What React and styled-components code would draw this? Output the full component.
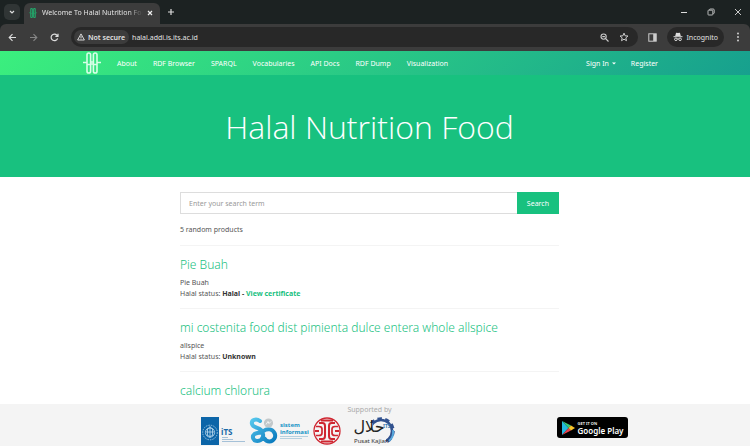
import { useState } from "react";
import styled, { createGlobalStyle } from "styled-components";

const GlobalStyle = createGlobalStyle`
  * {
    box-sizing: border-box;
  }
  body {
    margin: 0;
    background: #fff;
    color: #555;
    font-family: "Noto Sans", "Open Sans", sans-serif;
    font-size: 7px;
    line-height: 11px;
  }
  button, input {
    font: inherit;
    border: 0;
    padding: 0;
    margin: 0;
    background: none;
    color: inherit;
  }
  a {
    color: inherit;
    text-decoration: none;
  }
  svg {
    display: block;
    flex-shrink: 0;
  }
`;

const products = [
  { id: 1, name: "Pie Buah", detail: "Pie Buah", status: "Halal", certificate: true },
  {
    id: 2,
    name: "mi costenita food dist pimienta dulce entera whole allspice",
    detail: "allspice",
    status: "Unknown",
  },
  { id: 3, name: "calcium chlorura" },
];

const menus = [
  "About",
  "RDF Browser",
  "SPARQL",
  "Vocabularies",
  "API Docs",
  "RDF Dump",
  "Visualization",
];

function HalalMark({ size, color, width = 2 }) {
  return (
    <svg width={size} height={size} viewBox="0 0 20 22" fill="none" stroke={color} strokeWidth={width}>
      <path d="M1 10.5H5M8.5 12H11.5M8.5 10H11.5M15 10.5H19M5 12.5H8.5M11.5 12.5H15" strokeWidth="1.3" />
      <rect x="5" y="1" width="3.6" height="20" rx="1.8" />
      <rect x="11.4" y="1" width="3.6" height="20" rx="1.8" />
    </svg>
  );
}

function Browser() {
  return (
    <STBrowser>
      <STTabBar>
        <STTabSearch aria-label="Search tabs">
          <svg width="6" height="6" viewBox="0 0 6 6" fill="none" stroke="#ddd" strokeWidth="1.2">
            <path d="M1 2l2 2 2-2" />
          </svg>
        </STTabSearch>
        <STTab>
          <HalalMark size={10} color="#23a56a" width={2.4} />
          <STTabTitle>Welcome To Halal Nutrition Foo</STTabTitle>
          <STIconButton aria-label="Close tab">
            <svg width="6" height="6" viewBox="0 0 6 6" stroke="#eee" strokeWidth="1.2">
              <path d="M1 1l4 4M5 1L1 5" />
            </svg>
          </STIconButton>
        </STTab>
        <STIconButton aria-label="New tab">
          <svg width="8" height="8" viewBox="0 0 8 8" stroke="#ddd" strokeWidth="1.2">
            <path d="M4 1v6M1 4h6" />
          </svg>
        </STIconButton>
        <STWindowButtons>
          <STIconButton aria-label="Minimize">
            <svg width="8" height="8" viewBox="0 0 8 8" stroke="#ddd">
              <path d="M1 4.5h6" />
            </svg>
          </STIconButton>
          <STIconButton aria-label="Restore">
            <svg width="8" height="8" viewBox="0 0 8 8" fill="none" stroke="#ddd" strokeWidth=".8">
              <rect x="1" y="2.2" width="4.8" height="4.8" rx=".6" />
              <path d="M2.6 2V1.6q0-.6.6-.6h3q1 0 1 1v3q0 .6-.8.6" />
            </svg>
          </STIconButton>
          <STIconButton aria-label="Close">
            <svg width="8" height="8" viewBox="0 0 8 8" stroke="#ddd" strokeWidth=".9">
              <path d="M1 1l6 6M7 1L1 7" />
            </svg>
          </STIconButton>
        </STWindowButtons>
      </STTabBar>
      <STToolbar>
        <STHistory>
          <STIconButton aria-label="Back">
            <svg width="9" height="9" viewBox="0 0 9 9" fill="none" stroke="#ddd" strokeWidth="1.1">
              <path d="M8 4.5H1.3M4.5 1.2L1.2 4.5l3.3 3.3" />
            </svg>
          </STIconButton>
          <STIconButton aria-label="Forward">
            <svg width="9" height="9" viewBox="0 0 9 9" fill="none" stroke="#858585" strokeWidth="1.1">
              <path d="M1 4.5h6.7M4.5 1.2l3.3 3.3-3.3 3.3" />
            </svg>
          </STIconButton>
          <STIconButton aria-label="Reload">
            <svg width="9" height="9" viewBox="0 0 9 9" fill="none" stroke="#ddd" strokeWidth="1.2">
              <path d="M7.6 5.3A3.3 3.3 0 1 1 6.9 2.2l.8.8M8 .8v2.6H5.4" />
            </svg>
          </STIconButton>
        </STHistory>
        <STAddress>
          <STSecurity>
            <svg width="8" height="8" viewBox="0 0 8 8" fill="none" stroke="#e6e6e6" strokeWidth=".9">
              <path d="M4 .9L7.4 7H.6zM4 3v2M4 5.5v.8" />
            </svg>
            Not secure
          </STSecurity>
          <STUrl aria-label="Address" defaultValue="halal.addi.is.its.ac.id" />
          <STIconButton aria-label="Zoom">
            <svg width="9" height="9" viewBox="0 0 9 9" fill="none" stroke="#ccc" strokeWidth="1.1">
              <circle cx="3.6" cy="3.6" r="2.6" />
              <path d="M5.5 5.5l3 3M2.3 3.6h2.6" />
            </svg>
          </STIconButton>
          <STIconButton aria-label="Bookmark">
            <svg width="10" height="10" viewBox="0 0 10 10" fill="none" stroke="#ccc" strokeWidth="1">
              <path d="M5 1.1l1.1 2.7 2.9.2-2.2 1.9.7 2.8L5 7.2 2.5 8.7l.7-2.8L1 4l2.9-.2z" />
            </svg>
          </STIconButton>
        </STAddress>
        <STIconButton aria-label="Side panel">
          <svg width="9" height="9" viewBox="0 0 9 9" fill="none" stroke="#ccc">
            <rect x=".8" y=".8" width="7.4" height="7.4" />
            <path d="M5.2 1h3v7h-3z" fill="#ccc" stroke="none" />
          </svg>
        </STIconButton>
        <STIncognito>
          <svg width="10" height="10" viewBox="0 0 10 10" fill="none" stroke="#ddd" strokeWidth="1">
            <path d="M.5 4.7h9" />
            <path d="M2.2 4L3 1.1q.2-.5.7-.3L5 1.1l1.3-.3q.5-.2.7.3L7.8 4z" fill="#ddd" stroke="none" />
            <circle cx="2.9" cy="7.3" r="1.3" />
            <circle cx="7.1" cy="7.3" r="1.3" />
            <path d="M4.2 7q.8-.5 1.6 0" />
          </svg>
          Incognito
        </STIncognito>
        <STIconButton aria-label="Menu">
          <svg width="8" height="10" viewBox="0 0 8 10" fill="#ddd">
            <circle cx="4" cy="1.5" r=".9" />
            <circle cx="4" cy="5" r=".9" />
            <circle cx="4" cy="8.5" r=".9" />
          </svg>
        </STIconButton>
      </STToolbar>
    </STBrowser>
  );
}

function Sponsors() {
  return (
    <STSponsors>
      <svg width="46" height="28" viewBox="0 0 46 28">
        <rect x="1" width="18" height="28" fill="#0c65a8" />
        <g fill="none" stroke="#b9d8ee" strokeWidth=".8">
          <circle cx="10" cy="15.5" r="7.3" strokeDasharray="1.5 1" />
          <circle cx="10" cy="15.5" r="4.6" />
          <path d="M10 9v12M6.5 12.5l3.5-2 3.5 2M6 15h8M6.5 18q3.5 3 7 0M7.5 12v6M12.5 12v6" />
        </g>
        <text x="21" y="18" fontSize="8" fontWeight="700" fill="#1769a8">
          iTS
        </text>
        <path d="M22 20.5h6M22 22.5h11M22 24.5h23" stroke="#91b4d0" strokeWidth=".8" />
      </svg>
      <svg width="61" height="28" viewBox="0 0 61 28">
        <defs>
          <linearGradient id="wave" x1="0" y1="0" x2="1" y2="1">
            <stop offset="0" stopColor="#55c6ec" />
            <stop offset="1" stopColor="#0879bd" />
          </linearGradient>
        </defs>
        <path
          d="M11 4C7 1 2 3 3 7c1 4 6 3 9 6 4 4 2 11-3.5 11-4.5 0-6-4.500-3-7 3-2 6-.5 9-3 4-3 9-2 11 2 2 4-1 8.500-5 8.500-2 0-4-1-5-3"
          fill="none"
          stroke="url(#wave)"
          strokeWidth="4"
          strokeLinecap="round"
        />
        <circle cx="19.5" cy="6" r="4.6" fill="#c2c8ca" />
        <path d="M17 7.5l2-3 1 2 2-2" fill="none" stroke="#fff" strokeWidth=".8" />
        <text x="31" y="10" fontSize="6" fontWeight="700" fill="#1593c6">
          sistem
        </text>
        <text x="31" y="17" fontSize="6" fontWeight="700" fill="#1593c6">
          informasi
        </text>
        <path d="M31 19.5h28M31 21.5h22" stroke="#a4c8da" strokeWidth=".8" />
      </svg>
      <svg width="28" height="28" viewBox="0 0 28 28" fill="none" stroke="#cf2631">
        <circle cx="14" cy="14" r="13" strokeWidth="1.3" />
        <path d="M6 6h3.5q2.5 0 2.5 3v10q0 3-2.5 3H6M22 6h-3.5q-2.5 0-2.5 3v10q0 3 2.5 3H22" strokeWidth="2" />
        <path d="M3 9.5h3q3 0 3 2.5v4q0 2.5-3 2.5H3M25 9.5h-3q-3 0-3 2.5v4q0 2.5 3 2.5h3" strokeWidth="1.7" />
        <path d="M8 3.5h12M8 24.5h12M2 14h4M22 14h4" strokeWidth="1.8" />
      </svg>
      <STHalalLogo width="42" height="28" viewBox="0 0 42 28">
        <g fill="none" stroke="#31518e">
          <circle cx="27" cy="14" r="11" strokeWidth="2.5" />
          <circle cx="27" cy="14" r="12.5" strokeWidth="2.5" strokeDasharray="4.5 3.35" />
        </g>
        <path d="M35 24q5-4 4-11" fill="none" stroke="#56a7dc" strokeWidth="2" />
        <path d="M0 6h19v13h13v9H0z" fill="#f4f4f4" />
        <text x="15" y="15" textAnchor="middle" fontFamily="DejaVu Sans" fontSize="16" fill="#222">
          حلال
        </text>
        <text x="29" y="11" fontSize="5" fontWeight="700" fill="#3a77ad">
          ITS
        </text>
        <text x="0" y="26" fontSize="6" fill="#333">
          Pusat Kajian
        </text>
      </STHalalLogo>
    </STSponsors>
  );
}

function App() {
  const [term, setTerm] = useState("");

  return (
    <STPage>
      <GlobalStyle />
      <Browser />
      <STNav>
        <STNavInner>
          <a href="#home" aria-label="Home">
            <HalalMark size={22} color="#d8ffe8" width={1.6} />
          </a>
          <STMenus>
            {menus.map((menu) => (
              <a key={menu} href={`#${menu}`}>
                {menu}
              </a>
            ))}
          </STMenus>
          <STAccount>
            <STSignIn>
              Sign In
              <svg width="4" height="3" viewBox="0 0 4 3" fill="#fff">
                <path d="M0 .5h4l-2 2z" />
              </svg>
            </STSignIn>
            <a href="#register">Register</a>
          </STAccount>
        </STNavInner>
      </STNav>
      <STHero>
        <h1>Halal Nutrition Food</h1>
      </STHero>
      <STContent>
        <STSearch onSubmit={(e) => e.preventDefault()}>
          <input
            aria-label="Search term"
            placeholder="Enter your search term"
            value={term}
            onChange={(e) => setTerm(e.target.value)}
          />
          <button>Search</button>
        </STSearch>
        <STCount>5 random products</STCount>
        {products.map((product) => (
          <STProduct key={product.id}>
            <h2>
              <a href={`#product-${product.id}`}>{product.name}</a>
            </h2>
            {product.detail && <div>{product.detail}</div>}
            {product.status && (
              <div>
                Halal status: <strong>{product.status}</strong>
                {product.certificate && (
                  <>
                    <strong> - </strong>
                    <STCertificate href="#certificate">View certificate</STCertificate>
                  </>
                )}
              </div>
            )}
          </STProduct>
        ))}
      </STContent>
      <STFooter>
        <STSupported>Supported by</STSupported>
        <STFooterRow>
          <Sponsors />
          <STStore href="#google-play">
            <svg width="14" height="14" viewBox="0 0 14 14">
              <path d="M1 0v14l6.5-7z" fill="#22b8df" />
              <path d="M1 0l9 4.5L7.5 7z" fill="#38c978" />
              <path d="M1 14l9-4.5L7.5 7z" fill="#e7434f" />
              <path d="M10 4.5L14 7l-4 2.5L7.5 7z" fill="#f8c52b" />
            </svg>
            <STStoreText>
              <small>GET IT ON</small>
              Google Play
            </STStoreText>
          </STStore>
        </STFooterRow>
      </STFooter>
    </STPage>
  );
}

const STPage = styled.div`
  display: flex;
  flex-direction: column;
  height: 100vh;
`;

const STBrowser = styled.div`
  flex-shrink: 0;
  background: #1c2222;
  color: #e3e3e3;
`;

const STTabBar = styled.div`
  display: flex;
  align-items: center;
  height: 24px;
  padding: 0 8px 0 4px;
`;

const STIconButton = styled.button`
  display: flex;
  flex-shrink: 0;
`;

const STTabSearch = styled(STIconButton)`
  align-items: center;
  justify-content: center;
  width: 16px;
  height: 16px;
  margin-right: 4px;
  border-radius: 5px;
  background: #303535;
`;

const STTab = styled.div`
  display: flex;
  align-items: center;
  gap: 4px;
  width: 136px;
  height: 21px;
  margin: 3px 7px 0 0;
  padding: 0 7px 2px 4px;
  border-radius: 6px 6px 0 0;
  background: #3c3c3c;
`;

const STTabTitle = styled.div`
  flex: 1;
  overflow: hidden;
  white-space: nowrap;
  mask-image: linear-gradient(to right, #000 85%, transparent);
`;

const STWindowButtons = styled.div`
  display: flex;
  gap: 19px;
  margin-left: auto;
`;

const STToolbar = styled.div`
  display: flex;
  align-items: center;
  gap: 10px;
  height: 27px;
  padding: 0 8px 1px;
  border-radius: 6px 6px 0 0;
  background: #3c3c3c;
`;

const STHistory = styled.div`
  display: flex;
  gap: 12px;
  margin-right: 2px;
`;

const STAddress = styled.div`
  display: flex;
  flex: 1;
  align-items: center;
  gap: 10px;
  height: 20px;
  padding: 0 9px 0 3px;
  border-radius: 10px;
  background: #282828;
`;

const STSecurity = styled.div`
  display: flex;
  align-items: center;
  gap: 3px;
  height: 14px;
  padding: 0 4px 0 3px;
  border-radius: 7px;
  background: #3c3c3c;
  font-weight: 600;
  white-space: nowrap;
`;

const STUrl = styled.input`
  flex: 1;
  min-width: 0;
  margin-left: -7px;
  outline: none;
`;

const STIncognito = styled.div`
  display: flex;
  align-items: center;
  gap: 4px;
  height: 20px;
  padding: 0 6px;
  border-radius: 10px;
  background: #282828;
`;

const STNav = styled.nav`
  flex-shrink: 0;
  padding-right: 11px;
  background: linear-gradient(135deg, #3bef7e, #17a08e);
  color: #fff;
`;

const STNavInner = styled.div`
  display: flex;
  align-items: center;
  gap: 14px;
  max-width: 577px;
  height: 24px;
  margin: 0 auto;
  white-space: nowrap;
`;

const STMenus = styled.div`
  display: flex;
  gap: 16px;
`;

const STAccount = styled.div`
  display: flex;
  gap: 15px;
  margin-left: auto;
`;

const STSignIn = styled.button`
  display: flex;
  align-items: center;
  gap: 3px;
`;

const STHero = styled.header`
  flex-shrink: 0;
  padding: 32px 11px 30px 0;
  background: #18c17f;
  color: #fff;
  text-align: center;
  h1 {
    margin: 0;
    font-family: "Open Sans", sans-serif;
    font-size: 32px;
    font-weight: 300;
    line-height: 40px;
  }
`;

const STContent = styled.main`
  flex: 1;
  min-height: 0;
  overflow: hidden;
  padding: 15px 11px 0 0;
  > * {
    max-width: 379px;
    margin: 0 auto;
  }
`;

const STSearch = styled.form`
  display: flex;
  height: 22px;
  input {
    flex: 1;
    min-width: 0;
    padding: 0 8px;
    border: 1px solid #ddd;
    border-right: 0;
    outline: none;
  }
  input::placeholder {
    color: #999;
  }
  button {
    padding: 0 10px;
    background: #18c17f;
    color: #fff;
  }
`;

const STCount = styled.div`
  padding: 10px 0;
`;

const STProduct = styled.article`
  padding: 10px 0 9px;
  border-top: 1px solid #f4f4f4;
  h2 {
    margin: 0 0 3px;
    color: #18c17f;
    font-size: 12px;
    font-weight: 300;
    line-height: 18px;
  }
  strong {
    color: #333;
  }
`;

const STCertificate = styled.a`
  color: #18c17f;
  font-weight: 700;
`;

const STFooter = styled.footer`
  flex-shrink: 0;
  height: 42px;
  overflow: hidden;
  background: #f4f4f4;
`;

const STSupported = styled.div`
  padding-right: 11px;
  color: #aaa;
  text-align: center;
`;

const STFooterRow = styled.div`
  display: flex;
  justify-content: space-between;
  max-width: 505px;
  margin: 2px auto 0;
  padding-left: 77px;
`;

const STSponsors = styled.div`
  display: flex;
  gap: 3px;
`;

const STHalalLogo = styled.svg`
  margin-left: 10px;
`;

const STStore = styled.a`
  display: flex;
  align-items: center;
  gap: 3px;
  height: 21px;
  padding: 0 4px;
  border-radius: 3px;
  background: #000;
  color: #fff;
`;

const STStoreText = styled.div`
  font-size: 8px;
  font-weight: 600;
  line-height: 9px;
  white-space: nowrap;
  small {
    display: block;
    font-size: 4px;
    line-height: 5px;
  }
`;

export default App;
